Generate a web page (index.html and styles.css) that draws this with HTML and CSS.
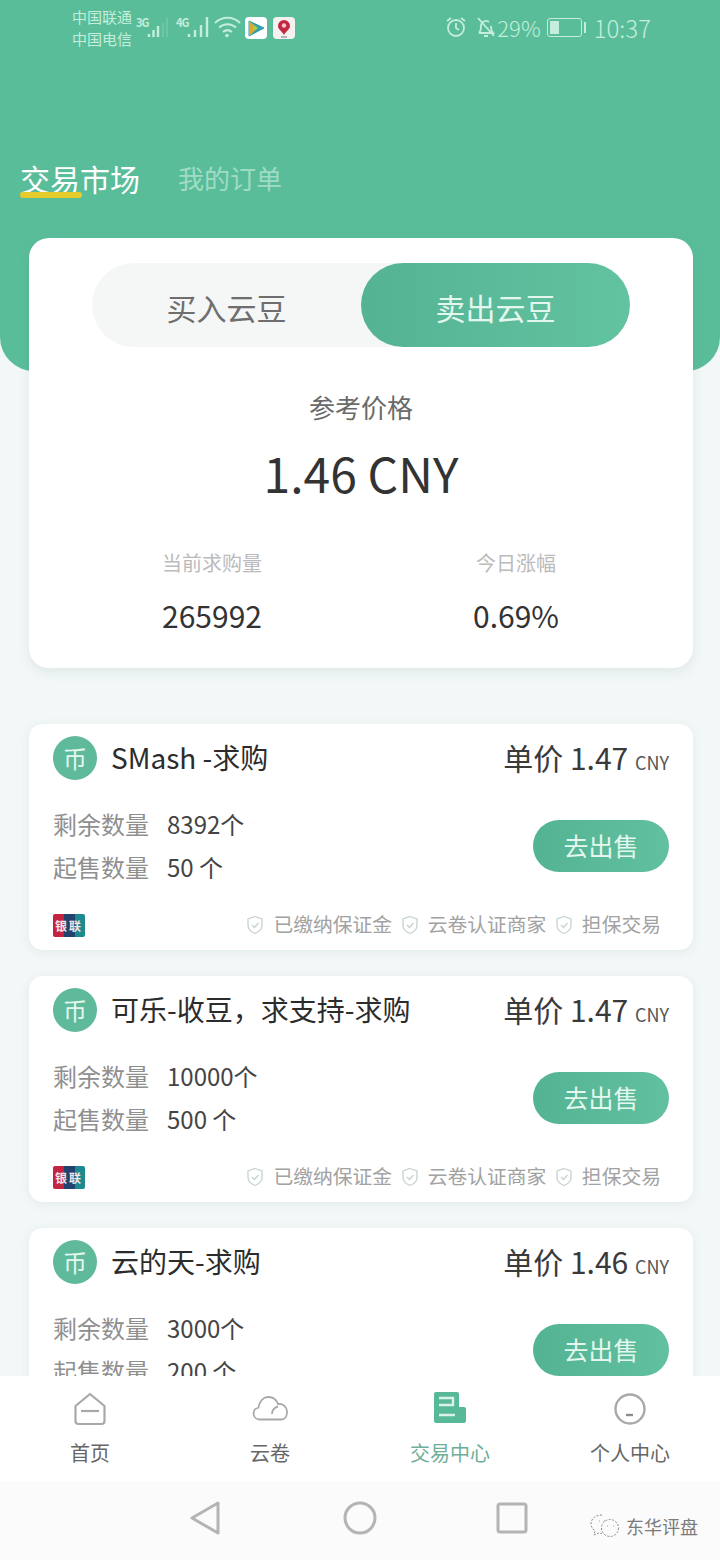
FILE: index.html
```html
<!DOCTYPE html>
<html lang="zh">
<head>
    <meta charset="UTF-8">
    <meta name="viewport" content="width=device-width, initial-scale=1.0">
    <title>交易市场</title>
    <link rel="stylesheet" href="styles.css">
</head>
<body>
    <div class="screen">
        <header class="top">
            <div class="statusbar">
                <div class="status-left">
                    <div class="carriers"><span>中国联通</span><span>中国电信</span></div>
                    <span class="net">3G</span>
                    <svg class="bars bars-3g" width="26" height="22" viewBox="0 0 26 22"><path d="M2 21v-3M6.500 21v-7M11 21v-11" stroke="#c4eddb" stroke-width="2.400"/><path d="M16 21V7M20 21V2" stroke="#c4eddb" stroke-width="2" opacity=".2"/></svg>
                    <span class="net">4G</span>
                    <svg class="bars bars-4g" width="22" height="22" viewBox="0 0 22 22"><path d="M2 21v-3M8 21v-7M14 21v-12M20 21V1" stroke="#c4eddb" stroke-width="2.400"/></svg>
                    <svg class="wifi" width="27" height="22" viewBox="0 0 27 22" fill="none" stroke="#c4eddb" stroke-width="2"><path d="M1 7c7-7 18-7 25 0M5 11.500c5-4.500 12-4.500 17 0M9 16c3-2.500 6-2.500 9 0"/><circle cx="13" cy="19.500" r="1.800" fill="#c4eddb" stroke="none"/></svg>
                    <svg class="app" width="22" height="22" viewBox="0 0 22 22"><rect width="22" height="22" rx="4" fill="#fff"/><path d="M4 4l15 7-15 8z" fill="#2d9fb0" stroke="#2d9fb0" stroke-linejoin="round"/><path d="M4 4l9 7-9 8z" fill="#d9a933"/><path d="M8 8l5 3-5 3z" fill="#a9cf4a"/></svg>
                    <svg class="app app-last" width="22" height="22" viewBox="0 0 22 22"><rect width="22" height="22" rx="4" fill="#f6f1f1"/><path d="M11 3a6 6 0 0 1 6 6c0 3.500-4 5-6 9-2-4-6-5.500-6-9a6 6 0 0 1 6-6z" fill="#c2283f"/><circle cx="11" cy="8.500" r="2.200" fill="#f3c6cc"/><path d="M8 20h6" stroke="#777" stroke-width="1"/></svg>
                </div>
                <div class="status-right">
                    <svg class="ic-alarm" width="22" height="22" viewBox="0 0 22 22" fill="none" stroke="#c4eddb" stroke-width="1.800"><circle cx="11" cy="12" r="8"/><path d="M11 7v5l3 2M2 5l4-3M20 5l-4-3"/></svg>
                    <svg class="ic-bell" width="22" height="22" viewBox="0 0 22 22" fill="none" stroke="#c4eddb" stroke-width="1.800"><path d="M4 17c2-2 2-4 2-7a5 5 0 0 1 8-4M16 10c0 3 0 5 2 7H4M9 20h4M3 2l16 18"/></svg>
                    <span class="pct">29%</span>
                    <div class="battery"><div class="battery-level"></div></div>
                    <div class="battery-cap"></div>
                    <span class="clock">10:37</span>
                </div>
            </div>
            <nav class="tabs">
                <span class="tab tab-active">交易市场</span>
                <span class="tab">我的订单</span>
            </nav>
        </header>

        <section class="summary">
            <div class="switch">
                <div class="switch-item">买入云豆</div>
                <div class="switch-item switch-on">卖出云豆</div>
            </div>
            <div class="ref-label">参考价格</div>
            <div class="ref-price">1.46 CNY</div>
            <div class="stats">
                <div class="stat">
                    <div class="stat-label">当前求购量</div>
                    <div class="stat-value">265992</div>
                </div>
                <div class="stat">
                    <div class="stat-label">今日涨幅</div>
                    <div class="stat-value">0.69%</div>
                </div>
            </div>
        </section>

        <main class="list">
            <article class="offer">
                <div class="offer-head">
                    <div class="coin">币</div>
                    <div class="offer-name">SMash -求购</div>
                    <div class="offer-price">单价 1.47 <small>CNY</small></div>
                </div>
                <div class="offer-body">
                    <div class="offer-rows">
                        <div class="row"><span class="row-label">剩余数量</span><span>8392个</span></div>
                        <div class="row"><span class="row-label">起售数量</span><span>50 个</span></div>
                    </div>
                    <div class="sell-btn">去出售</div>
                </div>
                <div class="offer-foot">
                    <div class="unionpay"><span class="up-text">银联</span></div>
                    <div class="badges">
                        <svg class="shield" width="18" height="20" viewBox="0 0 18 20" fill="none" stroke="#c5d3ce" stroke-width="1.300"><path d="M9 1.500l7 2.500v6c0 4-3 7-7 8.500-4-1.500-7-4.500-7-8.500V4z"/><path d="M6 10l2.500 2.500L12.500 8"/></svg>
                        <span class="badge-text">已缴纳保证金</span>
                        <svg class="shield" width="18" height="20" viewBox="0 0 18 20" fill="none" stroke="#c5d3ce" stroke-width="1.300"><path d="M9 1.500l7 2.500v6c0 4-3 7-7 8.500-4-1.500-7-4.500-7-8.500V4z"/><path d="M6 10l2.500 2.500L12.500 8"/></svg>
                        <span class="badge-text">云卷认证商家</span>
                        <svg class="shield" width="18" height="20" viewBox="0 0 18 20" fill="none" stroke="#c5d3ce" stroke-width="1.300"><path d="M9 1.500l7 2.500v6c0 4-3 7-7 8.500-4-1.500-7-4.500-7-8.500V4z"/><path d="M6 10l2.500 2.500L12.500 8"/></svg>
                        <span class="badge-text">担保交易</span>
                    </div>
                </div>
            </article>

            <article class="offer">
                <div class="offer-head">
                    <div class="coin">币</div>
                    <div class="offer-name">可乐-收豆，求支持-求购</div>
                    <div class="offer-price">单价 1.47 <small>CNY</small></div>
                </div>
                <div class="offer-body">
                    <div class="offer-rows">
                        <div class="row"><span class="row-label">剩余数量</span><span>10000个</span></div>
                        <div class="row"><span class="row-label">起售数量</span><span>500 个</span></div>
                    </div>
                    <div class="sell-btn">去出售</div>
                </div>
                <div class="offer-foot">
                    <div class="unionpay"><span class="up-text">银联</span></div>
                    <div class="badges">
                        <svg class="shield" width="18" height="20" viewBox="0 0 18 20" fill="none" stroke="#c5d3ce" stroke-width="1.300"><path d="M9 1.500l7 2.500v6c0 4-3 7-7 8.500-4-1.500-7-4.500-7-8.500V4z"/><path d="M6 10l2.500 2.500L12.500 8"/></svg>
                        <span class="badge-text">已缴纳保证金</span>
                        <svg class="shield" width="18" height="20" viewBox="0 0 18 20" fill="none" stroke="#c5d3ce" stroke-width="1.300"><path d="M9 1.500l7 2.500v6c0 4-3 7-7 8.500-4-1.500-7-4.500-7-8.500V4z"/><path d="M6 10l2.500 2.500L12.500 8"/></svg>
                        <span class="badge-text">云卷认证商家</span>
                        <svg class="shield" width="18" height="20" viewBox="0 0 18 20" fill="none" stroke="#c5d3ce" stroke-width="1.300"><path d="M9 1.500l7 2.500v6c0 4-3 7-7 8.500-4-1.500-7-4.500-7-8.500V4z"/><path d="M6 10l2.500 2.500L12.500 8"/></svg>
                        <span class="badge-text">担保交易</span>
                    </div>
                </div>
            </article>

            <article class="offer">
                <div class="offer-head">
                    <div class="coin">币</div>
                    <div class="offer-name">云的天-求购</div>
                    <div class="offer-price">单价 1.46 <small>CNY</small></div>
                </div>
                <div class="offer-body">
                    <div class="offer-rows">
                        <div class="row"><span class="row-label">剩余数量</span><span>3000个</span></div>
                        <div class="row"><span class="row-label">起售数量</span><span>200 个</span></div>
                    </div>
                    <div class="sell-btn">去出售</div>
                </div>
            </article>
        </main>

        <div class="bottom">
            <nav class="tabbar">
                <div class="tabbar-item">
                    <svg width="34" height="34" viewBox="0 0 34 34" fill="none" stroke="#a8a8a8" stroke-width="2.200" stroke-linejoin="round"><path d="M2.500 14L17 2l14.500 12v15a3 3 0 0 1-3 3h-23a3 3 0 0 1-3-3z"/><path d="M8 19h18"/></svg>
                    <span>首页</span>
                </div>
                <div class="tabbar-item">
                    <svg width="36" height="34" viewBox="0 0 36 34" fill="none" stroke="#a8a8a8" stroke-width="1.800"><path d="M7.500 27.500a6 6 0 0 1-1-11.900C7.500 9 11.500 5 16.500 5c4.500 0 8 2.800 9.500 7A7.800 7.800 0 0 1 35 20c0 4-2 7.500-5.500 7.500z"/><path d="M20 22c0-4 3-7 6-7.500"/></svg>
                    <span>云卷</span>
                </div>
                <div class="tabbar-item tabbar-active">
                    <svg width="34" height="34" viewBox="0 0 34 34"><path d="M3 0h21a2 2 0 0 1 2 2v13h5a2 2 0 0 1 2 2v12a2 2 0 0 1-2 2H3a2 2 0 0 1-2-2V2a2 2 0 0 1 2-2z" fill="#57b998"/><path d="M6 6h14v7H6M6 23h16" fill="none" stroke="#d9f3e8" stroke-width="2.400"/></svg>
                    <span>交易中心</span>
                </div>
                <div class="tabbar-item">
                    <svg width="34" height="34" viewBox="0 0 34 34" fill="none" stroke="#a8a8a8" stroke-width="2.400"><circle cx="17" cy="17" r="14.500"/><path d="M13 23h7" stroke="#8c8c8c"/></svg>
                    <span>个人中心</span>
                </div>
            </nav>
            <div class="sysnav">
                <svg width="36" height="36" viewBox="0 0 36 36" fill="none" stroke="#b4b4b4" stroke-width="3" stroke-linejoin="round"><path d="M30 3v30L4 18z"/></svg>
                <svg width="34" height="34" viewBox="0 0 34 34" fill="none" stroke="#b4b4b4" stroke-width="3"><circle cx="17" cy="17" r="15"/></svg>
                <svg width="32" height="32" viewBox="0 0 32 32" fill="none" stroke="#b4b4b4" stroke-width="3"><rect x="2" y="2" width="28" height="28" rx="2"/></svg>
            </div>
            <div class="watermark">
                <svg width="30" height="26" viewBox="0 0 30 26" fill="none" stroke="#8a8a8a" stroke-width="1" stroke-dasharray="2 1.500"><path d="M12 2C5 2 1 6 1 11c0 3 2 5 4 7l-1 4 5-2c1 .5 2 .5 3 .5"/><circle cx="20" cy="15" r="8.500"/><path d="M9 8h.5M14 8h.5M17 13h.5M23 13h.5" stroke-dasharray="none" stroke-width="1.500"/></svg>
                <span>东华评盘</span>
            </div>
        </div>
    </div>
</body>
</html>
```

FILE: styles.css
```css
* {
    box-sizing: border-box;
}
body {
    margin: 0;
    padding: 0;
    font-family: "Noto Sans CJK SC", "Noto Sans", sans-serif;
    background-color: #f2f7f7;
}
.screen {
    position: relative;
    width: 720px;
    height: 1560px;
    overflow: hidden;
    background-color: #f2f7f7;
}

/* top green block */
.top {
    height: 371px;
    background-color: #5abd9a;
    border-radius: 0 0 34px 34px;
    padding-top: 6px;
}
.statusbar {
    display: flex;
    justify-content: space-between;
    padding: 0 69px 0 72px;
    color: #c4eddb;
}
.status-left {
    display: flex;
    align-items: flex-start;
}
.carriers {
    display: flex;
    flex-direction: column;
    width: 64px;
    font-size: 15px;
    line-height: 22px;
}
.net {
    width: 11px;
    margin-top: 10px;
    font-size: 11px;
    font-weight: 700;
    letter-spacing: -1px;
    line-height: 12px;
    white-space: nowrap;
}
.bars {
    margin-top: 10px;
}
.bars-3g {
    margin-right: 3px;
}
.bars-4g {
    margin-right: 5px;
}
.wifi {
    margin: 10px 4px 0 0;
}
.app {
    margin: 11px 6px 0 0;
}
.app-last {
    margin-right: 0;
}
.status-right {
    display: flex;
    align-items: center;
    height: 38px;
    margin-top: 2px;
    font-weight: 300;
}
.ic-alarm {
    margin-right: 8px;
}
.ic-bell {
    margin-right: 0;
}
.pct {
    margin-right: 6px;
    font-size: 22px;
}
.battery {
    width: 35px;
    height: 19px;
    margin-right: 2px;
    border: 1px solid #c4eddb;
    border-radius: 3px;
    padding: 2px;
}
.battery-level {
    width: 9px;
    height: 100%;
    background-color: #c4eddb;
}
.battery-cap {
    width: 2px;
    height: 11px;
    margin-right: 8px;
    background-color: #c4eddb;
}
.clock {
    font-size: 24px;
}
.tabs {
    display: flex;
    align-items: center;
    gap: 38px;
    padding: 109px 0 0 20px;
}
.tab {
    position: relative;
    font-size: 26px;
    line-height: 38px;
    color: #a0dcc4;
}
.tab-active {
    font-size: 30px;
    color: #fff;
}
.tab-active::after {
    content: "";
    position: absolute;
    left: 0;
    bottom: -1px;
    width: 62px;
    height: 6px;
    border-radius: 3px;
    background-color: #e5cc2c;
}

/* summary card */
.summary {
    position: absolute;
    left: 29px;
    top: 238px;
    width: 664px;
    height: 430px;
    padding-top: 25px;
    background: #fff;
    border-radius: 20px;
    box-shadow: 0 4px 12px rgba(90, 140, 125, 0.12);
}
.switch {
    display: flex;
    justify-content: space-between;
    width: 538px;
    height: 84px;
    margin: 0 auto;
    background-color: #f5f6f6;
    border-radius: 42px;
}
.switch-item {
    width: 269px;
    line-height: 88px;
    border-radius: 42px;
    text-align: center;
    font-size: 30px;
    color: #6e6e6e;
}
.switch-on {
    color: #e4f7ee;
    background: linear-gradient(90deg, #54b392, #62c3a1);
}
.ref-label {
    margin-top: 42px;
    text-align: center;
    font-size: 26px;
    line-height: 36px;
    color: #6a6a6a;
}
.ref-price {
    margin-top: 14px;
    text-align: center;
    font-size: 48px;
    line-height: 66px;
    color: #333;
}
.stats {
    display: flex;
    margin-top: 43px;
    padding: 0 25px 0 31px;
}
.stat {
    flex: 1;
    text-align: center;
}
.stat-label {
    font-size: 20px;
    line-height: 30px;
    color: #bbb;
}
.stat-value {
    margin-top: 17px;
    font-size: 30px;
    line-height: 40px;
    color: #333;
}

/* offers */
.list {
    position: absolute;
    left: 29px;
    top: 724px;
    width: 664px;
    display: flex;
    flex-direction: column;
    gap: 26px;
}
.offer {
    height: 226px;
    padding: 12px 24px 0;
    background: #fff;
    border-radius: 14px;
    box-shadow: 0 2px 10px rgba(90, 140, 125, 0.1);
}
.offer-head {
    display: flex;
    align-items: center;
    height: 44px;
}
.coin {
    width: 44px;
    height: 44px;
    border-radius: 50%;
    margin-right: 14px;
    text-align: center;
    font-size: 24px;
    line-height: 44px;
    color: #e4f7ee;
    background-color: #5fb99b;
}
.offer-name {
    flex: 1;
    padding-bottom: 2px;
    font-size: 28px;
    color: #2c2c2c;
}
.offer-price {
    padding-bottom: 2px;
    font-size: 30px;
    color: #3a3a3a;
}
.offer-price small {
    font-size: 18px;
    color: #555;
}
.offer-body {
    display: flex;
    justify-content: space-between;
    align-items: center;
    margin-top: 22px;
    height: 86px;
}
.row {
    display: flex;
    gap: 18px;
    font-size: 24px;
    line-height: 43px;
    color: #444;
}
.row-label {
    color: #8f8f8f;
}
.sell-btn {
    width: 136px;
    height: 52px;
    margin-top: 2px;
    border-radius: 26px;
    text-align: center;
    font-size: 25px;
    line-height: 50px;
    color: #e4f7ee;
    background: linear-gradient(90deg, #54b392, #60c09f);
}
.offer-foot {
    display: flex;
    justify-content: space-between;
    align-items: center;
    margin-top: 24px;
    height: 26px;
}
.unionpay {
    width: 32px;
    height: 23px;
    border-radius: 2px;
    text-align: center;
    background: linear-gradient(90deg, #c4243f 0 35%, #23436f 35% 70%, #1c8a8e 70%);
}
.up-text {
    display: block;
    font-size: 12px;
    font-weight: 700;
    letter-spacing: 2px;
    line-height: 23px;
    color: #f2e6e6;
}
.badges {
    display: flex;
    align-items: center;
    padding-right: 8px;
    font-size: 19.800px;
    color: #a2a2a2;
}
.shield {
    margin-right: 9px;
}
.badge-text {
    margin-right: 8.500px;
    padding-bottom: 2px;
    line-height: 24px;
}
.badge-text:last-child {
    margin-right: 0;
}

/* bottom bars */
.bottom {
    position: absolute;
    left: 0;
    top: 1376px;
    width: 720px;
    height: 184px;
    background-color: #fbfbfb;
}
.tabbar {
    display: flex;
    height: 105px;
    padding-top: 16px;
    background-color: #fff;
}
.tabbar-item {
    flex: 1;
    display: flex;
    flex-direction: column;
    align-items: center;
    gap: 12px;
    font-size: 20px;
    line-height: 30px;
    color: #666;
}
.tabbar-active {
    color: #6fae98;
}
.sysnav {
    display: flex;
    align-items: center;
    gap: 119px;
    margin: 19px 0 0 188px;
}
.watermark {
    position: absolute;
    right: 22px;
    top: 137px;
    display: flex;
    align-items: center;
    gap: 6px;
    font-size: 18px;
    color: #7b7b7b;
}
```
